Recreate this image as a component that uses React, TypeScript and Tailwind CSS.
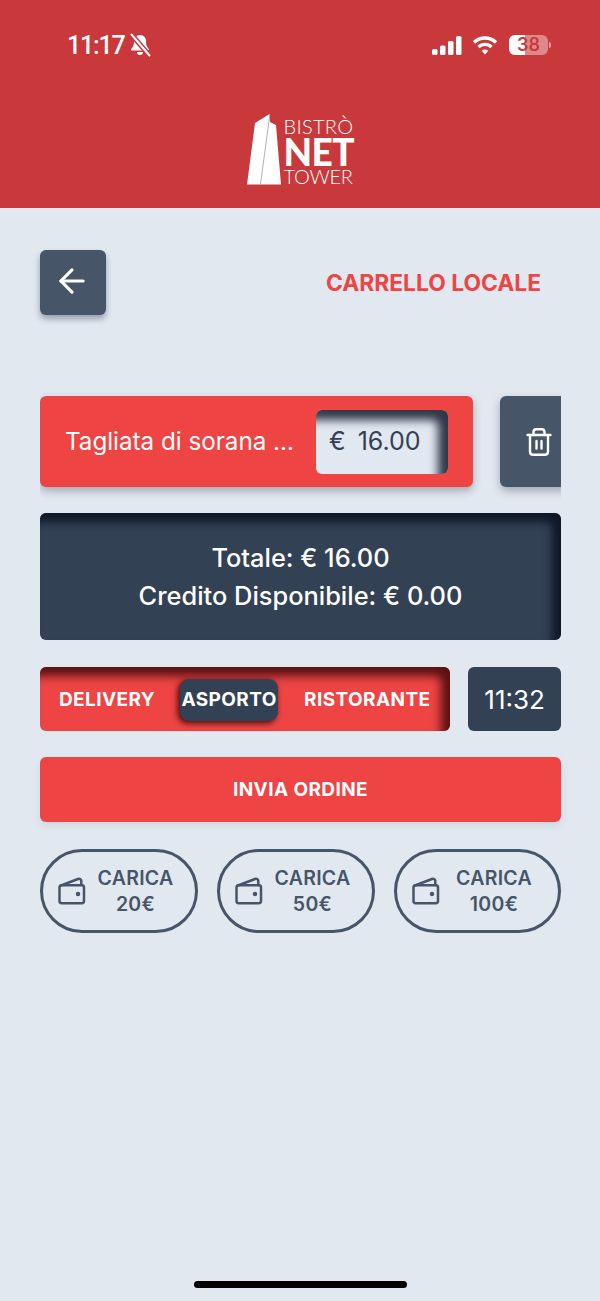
import React from 'react';
import { ArrowLeft } from 'lucide-react';

const Wallet = () => (
  <svg width="28" height="28" viewBox="0 0 28 28" fill="none" stroke="#475569" strokeWidth="2.5" strokeLinejoin="round" strokeLinecap="round" className="shrink-0">
    <path d="M3 8.500 20 2c1.600-.6 3.300.3 3.300 1.800V8" />
    <rect x="1.500" y="8.200" width="24.500" height="18" rx="2.200" />
    <circle cx="20" cy="17" r="1" fill="#475569" />
  </svg>
);

const Logo = () => (
  <div className="flex items-end gap-[3px] text-white font-['Lato',sans-serif]">
    <svg width="34" height="71" viewBox="0 0 34 71" className="shrink-0">
      <path d="M8 9 22.500 0 23 8 29 11 34 70.500 H0 Z" fill="#ffffff" />
      <path d="M22.800 1 L13.500 70" stroke="#a9a9a9" strokeWidth="0.9" />
    </svg>
    <div className="flex flex-col items-start w-[70px]">
      <span className="text-[20px] leading-[22px] font-light tracking-[0.3px]">BISTRÒ</span>
      <span className="text-[37px] leading-[30px] font-black tracking-[-0.5px]">NET</span>
      <span className="text-[20px] leading-[18px] font-light -tracking-[0.3px]">TOWER</span>
    </div>
  </div>
);

const Carica = ({ amount, width }: { amount: string; width: string }) => (
  <button className={`${width} h-[84px] rounded-[42px] border-[3px] border-[#475569] flex items-center pl-[15px] pr-[10px]`}>
    <Wallet />
    <span className="flex-1 flex flex-col items-center text-[#475569] font-semibold text-[19.5px] leading-[26px] tracking-[0.3px]">
      <span>CARICA</span>
      <span>{amount}</span>
    </span>
  </button>
);

const TrashIcon = () => (
  <svg width="30" height="30" viewBox="0 0 30 30" fill="none" stroke="white" strokeWidth="2.400" strokeLinecap="round" strokeLinejoin="round">
    <path d="M3.500 8h23" />
    <path d="M9.500 8V5c0-1.600 1.200-2.800 2.800-2.800h5.400c1.600 0 2.800 1.200 2.800 2.800v3" />
    <path d="M6 8v16.500c0 2 1.500 3.300 3.300 3.300h11.400c1.800 0 3.300-1.300 3.300-3.300V8" />
    <path d="M12.500 14v7.500" />
    <path d="M17.500 14v7.500" />
  </svg>
);

export default function App() {
  return (
    <div className="relative w-[600px] h-[1301px] overflow-hidden bg-[#e2e8f0] font-['Inter',sans-serif]">
      <header className="h-[208px] bg-[#c9393b] flex flex-col">
        <div className="h-[90px] pt-[31px] pl-[67px] pr-[49px] flex items-start justify-between text-white">
          <div className="flex items-center gap-[5px] h-[28px]">
            <span className="text-[25px] leading-[28px] pt-[1px] font-medium tracking-[-1.2px] font-['Roboto',sans-serif]">11:17</span>
            <svg width="22" height="24" viewBox="0 0 22 24" fill="white">
              <path d="M11 2c-4 0-6 3-6 6.500 0 4-1 5.500-2.800 7.500-.5.800 0 1.500 1 1.500h15.600c1 0 1.500-.7 1-1.500C18 14 17 12.500 17 8.500 17 5 15 2 11 2Z" />
              <path d="M8 19h6c0 1.800-1.300 3-3 3s-3-1.200-3-3Z" />
              <path d="M2.500 1.500 20.500 22.500" stroke="#c9393b" strokeWidth="5" />
              <path d="M2.500 1.500 20.500 22.500" stroke="white" strokeWidth="2" strokeLinecap="round" />
            </svg>
          </div>
          <div className="flex items-center gap-[7px] h-[28px]">
            <svg width="30" height="19" viewBox="0 0 30 19" fill="white">
              <rect x="0" y="13" width="5.500" height="6" rx="1.500" />
              <rect x="8" y="9.500" width="5.500" height="9.500" rx="1.500" />
              <rect x="16" y="5" width="5.500" height="14" rx="1.500" />
              <rect x="24" y="0" width="5.500" height="19" rx="1.500" />
            </svg>
            <svg width="26" height="20" viewBox="0 0 26 20" fill="none" stroke="white" strokeWidth="3.400" className="ml-[3px]">
              <path d="M2 7.500C8 1.500 18 1.500 24 7.500" />
              <path d="M6.500 12C10 8.500 16 8.500 19.500 12" />
              <path d="M13 19.500 9.700 15.800C11.500 14 14.500 14 16.300 15.800Z" fill="white" stroke="none" />
            </svg>
            <div className="flex items-center ml-[4px]">
              <div className="relative w-[39px] h-[20px] rounded-[6px] overflow-hidden bg-white/40 flex items-center justify-center">
                <div className="absolute inset-y-0 left-0 w-[16px] bg-white" />
                <span className="relative text-[#c9393b] text-[18px] leading-[20px] font-semibold">38</span>
              </div>
              <div className="w-[2px] h-[6px] ml-[1px] rounded-r bg-white/50" />
            </div>
          </div>
        </div>
        <div className="flex justify-center pt-[24px]">
          <Logo />
        </div>
      </header>

      <main className="pl-[40px] pr-[39px] pt-[42px]">
        <div className="flex items-center justify-between pr-[20px] h-[65px]">
          <button className="w-[66px] h-[65px] rounded-[6px] bg-[#475569] shadow-[0_4px_6px_rgba(15,23,42,0.35)] flex items-start justify-center pt-[12px] pr-[3px] text-white">
            <ArrowLeft size={38} strokeWidth={2} />
          </button>
          <h1 className="text-[#ef4444] text-[22.8px] leading-[28px] font-bold">CARRELLO LOCALE</h1>
        </div>

        <div className="mt-[77px] -mb-[12px] pt-[4px] pb-[12px] flex gap-[27px] overflow-hidden">
          <div className="w-[433px] h-[91px] shrink-0 rounded-[6px] bg-[#ef4444] shadow-[0_4px_8px_rgba(15,23,42,0.3)] flex items-center pl-[25px] pr-[25px] justify-between">
            <span className="text-white text-[24.2px] leading-[32px] whitespace-nowrap">Tagliata di sorana ...</span>
            <div className="w-[132px] h-[64px] shrink-0 rounded-[6px] bg-[#e2e8f0] shadow-[inset_-10px_10px_10px_rgba(15,23,42,0.85)] flex items-center pl-[13px] text-[25px] text-[#334155]">
              <span>€</span>
              <span className="ml-[12px]">16.00</span>
            </div>
          </div>
          <div className="w-[90px] h-[91px] shrink-0 rounded-[6px] bg-[#475569] shadow-[0_4px_8px_rgba(15,23,42,0.3)] flex items-center pl-[24px] text-white">
            <TrashIcon />
          </div>
        </div>

        <div className="mt-[26px] h-[127px] rounded-[6px] bg-[#334155] shadow-[inset_-9px_9px_10px_rgba(2,6,23,0.7)] flex flex-col items-center justify-center text-white text-[25.4px] leading-[38px] font-medium">
          <span>Totale: € 16.00</span>
          <span>Credito Disponibile: € 0.00</span>
        </div>

        <div className="mt-[27px] flex gap-[18px]">
          <div className="w-[411px] h-[64px] pt-[2px] rounded-[6px] bg-[#ef4444] shadow-[inset_-9px_9px_10px_rgba(40,0,0,0.75)] flex items-center text-white text-[19px] font-bold tracking-[0.4px]">
            <span className="ml-[19px]">DELIVERY</span>
            <span className="ml-[25px] w-[98px] h-[42px] rounded-[9px] bg-[#334155] shadow-[-2px_2px_6px_rgba(40,0,0,0.9)] flex items-center justify-center whitespace-nowrap">ASPORTO</span>
            <span className="ml-[26px]">RISTORANTE</span>
          </div>
          <div className="w-[93px] h-[64px] rounded-[6px] bg-[#334155] flex items-center justify-center text-white text-[26px]">11:32</div>
        </div>

        <button className="mt-[26px] w-full h-[65px] pt-[2px] rounded-[6px] bg-[#ef4444] shadow-[0_4px_8px_rgba(15,23,42,0.08)] text-white text-[19px] font-bold tracking-[0.4px] flex items-center justify-center">
          INVIA ORDINE
        </button>

        <div className="mt-[27px] flex justify-between">
          <Carica amount="20€" width="w-[158px]" />
          <Carica amount="50€" width="w-[158px]" />
          <Carica amount="100€" width="w-[167px]" />
        </div>
      </main>

      <div className="absolute left-[194px] top-[1281px] w-[213px] h-[7px] rounded-full bg-black" />
    </div>
  );
}
